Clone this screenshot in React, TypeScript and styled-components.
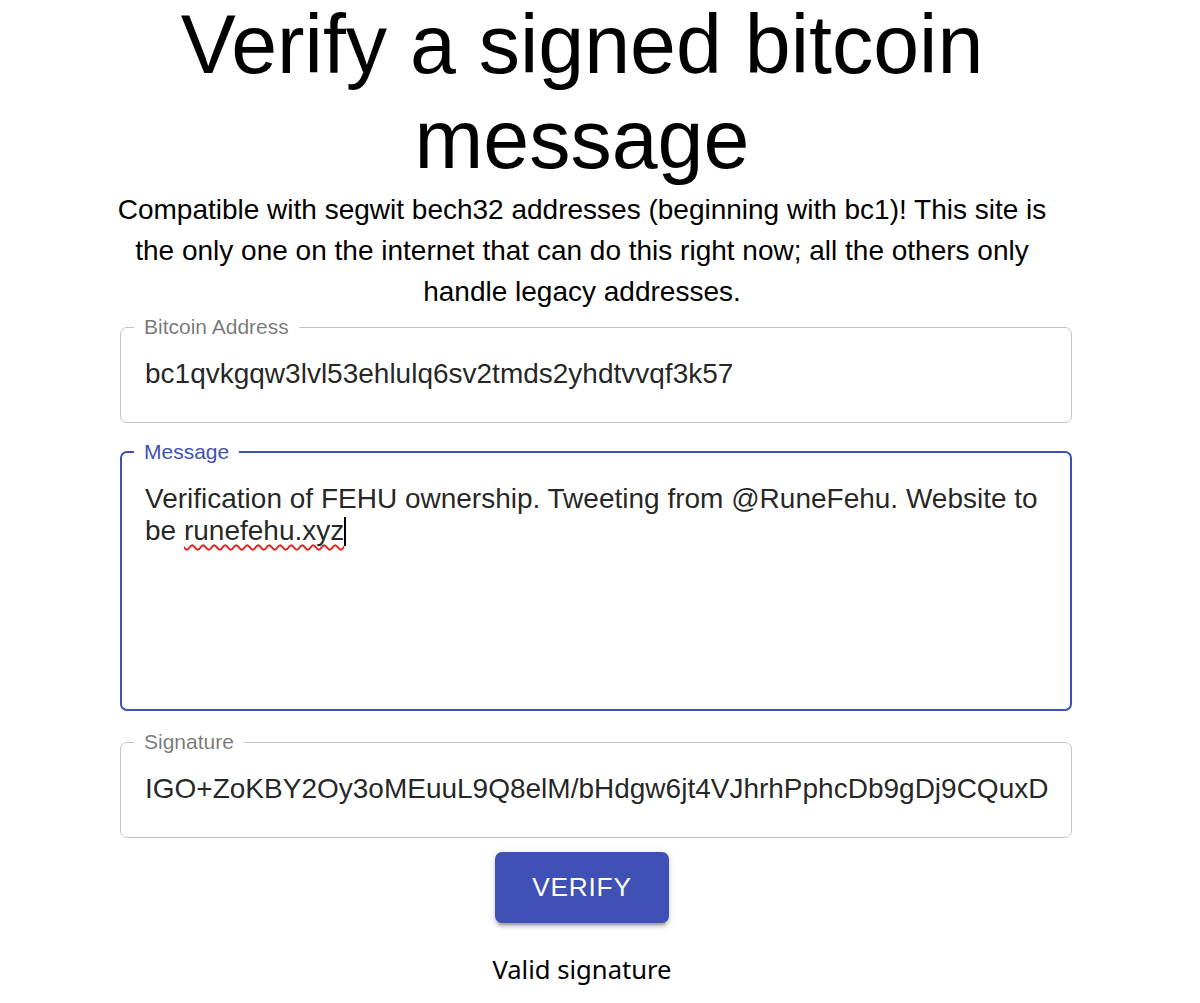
import React from "react";
import styled, { createGlobalStyle } from "styled-components";

const GlobalStyle = createGlobalStyle`
  html, body {
    margin: 0;
    padding: 0;
    background: #ffffff;
  }
  body {
    font-family: "Liberation Sans", Arial, sans-serif;
    color: #000;
  }
`;

const PRIMARY = "#3f51b5";

const Page = styled.main`
  width: 1164px;
  display: flex;
  flex-direction: column;
  align-items: center;
`;

const Title = styled.h1`
  width: 952px;
  margin: -3px 0 0;
  font-family: "Liberation Sans", Arial, sans-serif;
  font-weight: 400;
  font-size: 82.5px;
  line-height: 95px;
  text-align: center;
  color: #000;
`;

const Subtitle = styled.p`
  width: 952px;
  margin: 2px 0 0;
  font-family: "Liberation Sans", Arial, sans-serif;
  font-size: 28px;
  line-height: 41px;
  text-align: center;
  color: #000;
`;

const Form = styled.form`
  align-self: flex-start;
  margin: 3px 0 0 120px;
  width: 952px;
  display: flex;
  flex-direction: column;
`;

const Field = styled.fieldset<{ $focused?: boolean; $gap?: number }>`
  margin: ${(p) => p.$gap ?? 0}px 0 0;
  padding: 0;
  min-width: 0;
  border: ${(p) => (p.$focused ? `2px solid ${PRIMARY}` : "1px solid #c4c4c4")};
  border-radius: 7px;
`;

const Legend = styled.legend<{ $focused?: boolean }>`
  margin-left: ${(p) => (p.$focused ? 12 : 13)}px;
  padding: 0 10px;
  font-family: "Liberation Sans", Arial, sans-serif;
  font-size: 21px;
  line-height: 24px;
  color: ${(p) => (p.$focused ? PRIMARY : "rgba(0, 0, 0, 0.54)")};
`;

const Input = styled.input`
  display: block;
  width: 100%;
  box-sizing: border-box;
  border: 0;
  outline: none;
  background: transparent;
  padding: 19px 23px 32px 24px;
  font-family: "Liberation Sans", Arial, sans-serif;
  font-size: 28px;
  line-height: 32px;
  height: 83px;
  color: rgba(0, 0, 0, 0.87);
`;

const TextArea = styled.div`
  box-sizing: border-box;
  height: 245px;
  padding: 19px 23px 19px 23px;
  font-family: "Liberation Sans", Arial, sans-serif;
  font-size: 28px;
  line-height: 32px;
  color: rgba(0, 0, 0, 0.87);
  white-space: pre-wrap;
  outline: none;
`;

const Misspelled = styled.span`
  text-decoration: underline wavy #e0201b;
  text-decoration-thickness: 1.6px;
  text-underline-offset: 4px;
  text-decoration-skip-ink: none;
`;

const Caret = styled.span`
  display: inline-block;
  width: 1.5px;
  height: 29px;
  vertical-align: -6px;
  background: #000;
`;

const VerifyButton = styled.button`
  margin-top: 14px;
  height: 71px;
  padding: 0 37px;
  border: 0;
  border-radius: 7px;
  background: ${PRIMARY};
  color: #ffffff;
  font-family: "Liberation Sans", Arial, sans-serif;
  font-size: 26.25px;
  letter-spacing: 0.75px;
  text-transform: uppercase;
  cursor: pointer;
  box-shadow: 0px 5px 2px -3.5px rgba(0, 0, 0, 0.2),
    0px 3.5px 3.5px 0px rgba(0, 0, 0, 0.14),
    0px 1.75px 8.75px 0px rgba(0, 0, 0, 0.12);
`;

const Status = styled.p`
  margin: 30px 0 0;
  font-family: "Noto Sans", "Open Sans", sans-serif;
  font-size: 25.6px;
  line-height: 34px;
  color: #000;
`;

export default function App() {
  return (
    <>
      <GlobalStyle />
      <Page>
        <Title>Verify a signed bitcoin message</Title>
        <Subtitle>
          Compatible with segwit bech32 addresses (beginning with bc1)! This site is the only one on
          the internet that can do this right now; all the others only handle legacy addresses.
        </Subtitle>
        <Form onSubmit={(e) => e.preventDefault()}>
          <Field>
            <Legend>Bitcoin Address</Legend>
            <Input readOnly value="bc1qvkgqw3lvl53ehlulq6sv2tmds2yhdtvvqf3k57" />
          </Field>
          <Field $focused $gap={17}>
            <Legend $focused>Message</Legend>
            <TextArea role="textbox" aria-multiline="true">
              Verification of FEHU ownership. Tweeting from @RuneFehu. Website to be{" "}
              <Misspelled>runefehu.xyz</Misspelled>
              <Caret />
            </TextArea>
          </Field>
          <Field $gap={19}>
            <Legend>Signature</Legend>
            <Input readOnly value="IGO+ZoKBY2Oy3oMEuuL9Q8elM/bHdgw6jt4VJhrhPphcDb9gDj9CQuxD" />
          </Field>
        </Form>
        <VerifyButton type="button">Verify</VerifyButton>
        <Status>Valid signature</Status>
      </Page>
    </>
  );
}
